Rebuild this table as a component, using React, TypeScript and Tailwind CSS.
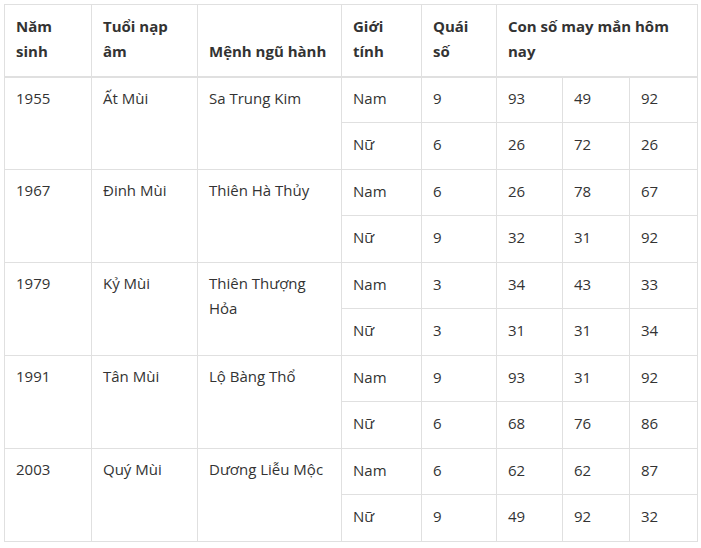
import React from 'react';

type Row = {
  year: string;
  napAm: string;
  menh: string;
  nam: { quai: string; nums: string[] };
  nu: { quai: string; nums: string[] };
};

const rows: Row[] = [
  { year: '1955', napAm: 'Ất Mùi', menh: 'Sa Trung Kim', nam: { quai: '9', nums: ['93', '49', '92'] }, nu: { quai: '6', nums: ['26', '72', '26'] } },
  { year: '1967', napAm: 'Đinh Mùi', menh: 'Thiên Hà Thủy', nam: { quai: '6', nums: ['26', '78', '67'] }, nu: { quai: '9', nums: ['32', '31', '92'] } },
  { year: '1979', napAm: 'Kỷ Mùi', menh: 'Thiên Thượng Hỏa', nam: { quai: '3', nums: ['34', '43', '33'] }, nu: { quai: '3', nums: ['31', '31', '34'] } },
  { year: '1991', napAm: 'Tân Mùi', menh: 'Lộ Bàng Thổ', nam: { quai: '9', nums: ['93', '31', '92'] }, nu: { quai: '6', nums: ['68', '76', '86'] } },
  { year: '2003', napAm: 'Quý Mùi', menh: 'Dương Liễu Mộc', nam: { quai: '6', nums: ['62', '62', '87'] }, nu: { quai: '9', nums: ['49', '92', '32'] } },
];

const th = 'border border-[#e0e0e0] border-b-2 px-[11px] pt-[8px] pb-[12px] text-left align-bottom font-bold';
const td = 'border border-[#e0e0e0] px-[11px] pt-0 pb-[3px] align-middle';
const tdSpan = 'border border-[#e0e0e0] px-[11px] pt-[8px] align-top';

export default function App() {
  return (
    <div className="bg-white min-h-[548px] pt-[4px] pl-[4px] font-['Open_Sans',sans-serif] text-[15px] leading-[25px] text-[#333]">
      <table className="table-fixed border-collapse w-[693px]">
        <colgroup>
          <col className="w-[87px]" />
          <col className="w-[106px]" />
          <col className="w-[144px]" />
          <col className="w-[80px]" />
          <col className="w-[75px]" />
          <col className="w-[66px]" />
          <col className="w-[67px]" />
          <col className="w-[68px]" />
        </colgroup>
        <thead>
          <tr className="h-[72px]">
            <th className={th}>Năm sinh</th>
            <th className={th}>Tuổi nạp âm</th>
            <th className={th}>Mệnh ngũ hành</th>
            <th className={th}>Giới tính</th>
            <th className={th}>Quái số</th>
            <th className={th} colSpan={3}>Con số may mắn hôm nay</th>
          </tr>
        </thead>
        <tbody>
          {rows.map((r) => (
            <React.Fragment key={r.year}>
              <tr className="h-[46px]">
                <td className={tdSpan} rowSpan={2}>{r.year}</td>
                <td className={tdSpan} rowSpan={2}>{r.napAm}</td>
                <td className={tdSpan} rowSpan={2}>{r.menh}</td>
                <td className={td}>Nam</td>
                <td className={td}>{r.nam.quai}</td>
                {r.nam.nums.map((n, i) => (
                  <td key={i} className={td}>{n}</td>
                ))}
              </tr>
              <tr className="h-[47px]">
                <td className={td}>Nữ</td>
                <td className={td}>{r.nu.quai}</td>
                {r.nu.nums.map((n, i) => (
                  <td key={i} className={td}>{n}</td>
                ))}
              </tr>
            </React.Fragment>
          ))}
        </tbody>
      </table>
    </div>
  );
}
